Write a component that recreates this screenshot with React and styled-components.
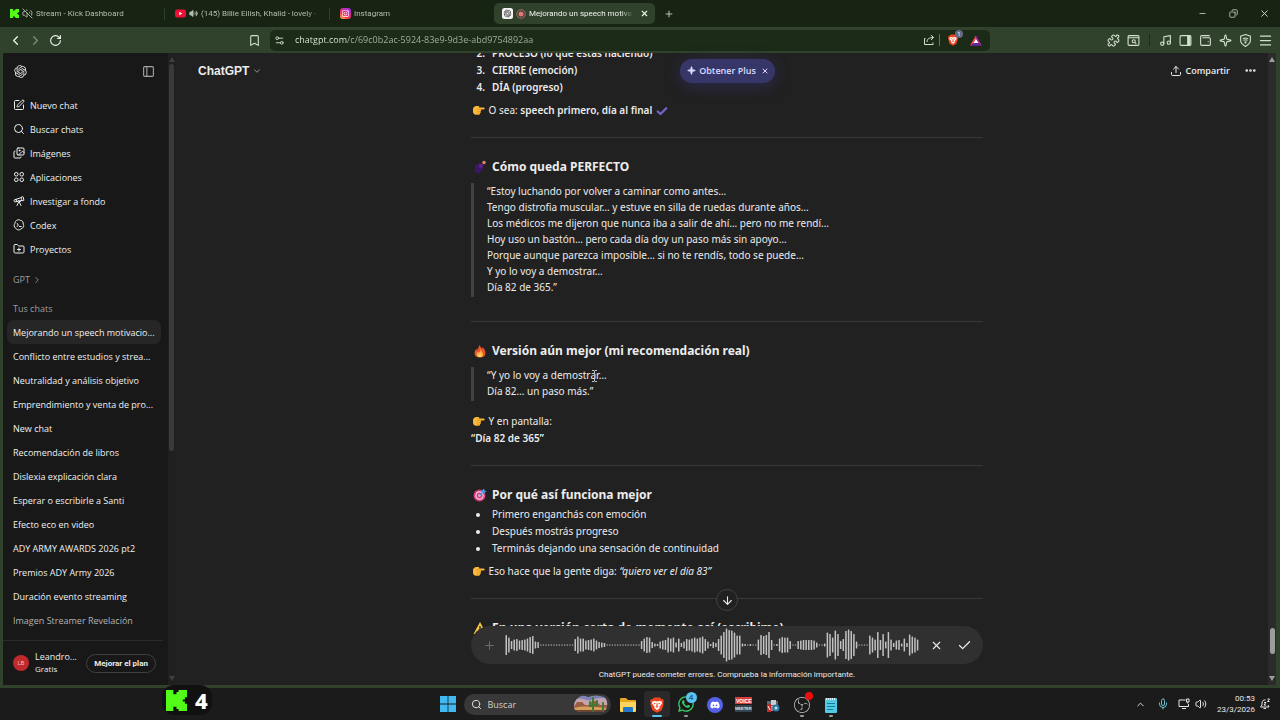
import { useLayoutEffect, useRef } from "react";
import styled, { createGlobalStyle } from "styled-components";
import {
  ArrowDown,
  Bookmark,
  Check,
  ChevronDown,
  ChevronLeft,
  ChevronRight,
  ChevronUp,
  Copy,
  Ellipsis,
  FolderPlus,
  Images,
  Menu,
  Mic,
  Minus,
  Music,
  PanelLeft,
  Plus,
  Puzzle,
  RotateCw,
  Search,
  Settings2,
  Sparkle,
  SquarePen,
  Telescope,
  Upload,
  Volume2,
  VolumeOff,
  WalletMinimal,
  X,
} from "lucide-react";
import { FaDiscord, FaInstagram, FaWhatsapp } from "react-icons/fa";
import { RiOpenaiFill } from "react-icons/ri";
import { SiObsstudio } from "react-icons/si";

const COLORS = {
  frame: "#30422c",
  tabBar: "#172413",
  address: "#1b2b17",
  sidebar: "#181818",
  main: "#212121",
  line: "#383838",
  text: "#ececec",
  chrome: "#d5ded1",
};

const FONT_UI = `"Open Sans", "Noto Sans", sans-serif`;
const FONT_BODY = `"Noto Sans", "Open Sans", sans-serif`;
const FONT_SMALL = `Roboto, "Noto Sans", sans-serif`;

const GlobalStyle = createGlobalStyle`
  * {
    box-sizing: border-box;
  }

  body {
    margin: 0;
    background: #1b1b1b;
    color: ${COLORS.text};
    font-family: ${FONT_UI};
    overflow: hidden;
  }

  button,
  input {
    margin: 0;
    padding: 0;
    border: 0;
    background: none;
    color: inherit;
    font: inherit;
    outline: none;
  }

  a {
    color: inherit;
    text-decoration: none;
  }

  b {
    font-weight: 600;
  }

  svg {
    display: block;
    flex-shrink: 0;
  }

  ul,
  ol,
  p,
  h1,
  h2,
  blockquote {
    margin: 0;
    padding: 0;
    list-style: none;
  }
`;

const Desktop = styled.div`
  display: flex;
  flex-direction: column;
  height: 100vh;
`;

const IconButton = styled.button`
  display: flex;
  align-items: center;
  justify-content: center;
  flex-shrink: 0;
  width: ${(props) => props.$width || "20px"};
  height: 20px;
  color: ${(props) => props.$color || "inherit"};
  cursor: pointer;
`;

/* ---------- browser: tabs ---------- */

const TabBar = styled.header`
  display: flex;
  align-items: center;
  height: 27px;
  background: ${COLORS.tabBar};
  color: ${COLORS.chrome};
`;

const Tab = styled.div`
  display: flex;
  align-items: center;
  gap: 3px;
  flex: 0 0 ${(props) => (props.$active ? "161px" : "164px")};
  min-width: 0;
  height: 21px;
  padding: ${(props) => (props.$active ? "0 3px 0 8px" : "0 10px")};
  border-radius: 5px;
  background: ${(props) => (props.$active ? COLORS.frame : "transparent")};
  color: ${(props) => (props.$active ? "#eef3ec" : "#b3bfae")};
`;

const TabTitle = styled.span`
  flex: 1;
  min-width: 0;
  overflow: hidden;
  font-family: ${FONT_SMALL};
  font-size: 8px;
  line-height: 12px;
  white-space: nowrap;
  mask-image: linear-gradient(90deg, #000 calc(100% - 12px), transparent);
`;

const Divider = styled.span`
  flex-shrink: 0;
  width: 1px;
  height: 12px;
  background: ${(props) => props.$color || "#30402c"};
`;

const WindowControls = styled.div`
  display: flex;
  margin-left: auto;
`;

/* ---------- browser: toolbar ---------- */

const Toolbar = styled.div`
  display: grid;
  grid-template-columns: 266px minmax(0, 1fr) 286px;
  align-items: center;
  height: 26px;
  padding: 0 4px;
  background: ${COLORS.frame};
  color: ${COLORS.chrome};
`;

const ToolGroup = styled.div`
  display: flex;
  align-items: center;
  padding: 0 1px;

  & > .push {
    margin-left: auto;
  }
`;

const AddressBar = styled.div`
  display: flex;
  align-items: center;
  height: 21px;
  padding: 0 4px;
  border-radius: 5px;
  background: ${COLORS.address};
`;

const AddressInput = styled.input`
  flex: 1;
  min-width: 0;
  margin-left: 10px;
  font-size: 9px;
  line-height: 20px;
  background: linear-gradient(90deg, #e9efe6 52px, #a9b6a4 52px);
  background-clip: text;
  color: transparent;
`;

const ShieldBadge = styled.span`
  position: relative;
  margin: 0 8px;

  & > small {
    position: absolute;
    top: -4px;
    right: -5px;
    width: 8px;
    border-radius: 4px;
    background: #646a80;
    color: #fff;
    font-size: 6px;
    line-height: 8px;
    text-align: center;
  }
`;

/* ---------- window body ---------- */

const WindowBody = styled.div`
  display: flex;
  flex: 1;
  min-height: 0;
  border: solid ${COLORS.frame};
  border-width: 0 4px 3px 3px;
  background: ${COLORS.main};
`;

const ScrollTrack = styled.div`
  display: flex;
  flex-direction: column;
  align-items: center;
  flex-shrink: 0;
  width: ${(props) => props.$width};
  padding: 4px 0;
  background: ${(props) => props.$track};
  color: ${(props) => props.$thumb};

  & > i {
    width: 5px;
    border-radius: 3px;
    background: currentColor;
    flex: ${(props) => props.$size} 0 0;
  }

  &::before,
  &::after {
    content: "";
    border: 3px solid transparent;
  }

  &::before {
    margin-bottom: 2px;
    border-top: 0;
    border-bottom: 5px solid ${(props) => props.$arrow};
  }

  &::after {
    margin-top: 2px;
    border-bottom: 0;
    border-top: 5px solid ${(props) => props.$arrow};
  }
`;

const TrackGap = styled.span`
  flex: ${(props) => props.$size} 0 0;
`;

/* ---------- sidebar ---------- */

const Sidebar = styled.aside`
  display: flex;
  flex-direction: column;
  flex: 0 0 165px;
  background: ${COLORS.sidebar};
  font-size: 9px;
`;

const SidebarTop = styled.div`
  display: flex;
  align-items: center;
  justify-content: space-between;
  height: 36px;
  padding: 0 13px 0 10px;
`;

const SidebarList = styled.ul`
  padding: ${(props) => props.$padding || "0"};
`;

const SidebarLink = styled.a`
  display: flex;
  align-items: center;
  gap: 5px;
  height: 24px;
  margin: 0 7px 0 4px;
  padding: 0 6px;
  border-radius: 7px;
  background: ${(props) => (props.$active ? "#262626" : "transparent")};
  color: ${(props) => (props.$faded ? "#b4b4b4" : "#f0f0f0")};
  white-space: nowrap;
`;

const SectionLabel = styled.h2`
  display: flex;
  align-items: center;
  gap: 2px;
  height: 23px;
  margin-top: 6px;
  padding: 0 10px;
  color: #9d9d9d;
  font-size: 9px;
  font-weight: 400;
`;

const Account = styled.div`
  display: flex;
  align-items: center;
  height: 45px;
  margin: auto 5px 0 0;
  padding: 0 7px 0 10px;
  border-top: 1px solid #2a2a2a;
`;

const Avatar = styled.span`
  width: 16px;
  margin-right: 6px;
  border-radius: 50%;
  background: #c02a2d;
  color: #f3c9c9;
  font-size: 6px;
  line-height: 16px;
  text-align: center;
`;

const AccountName = styled.span`
  flex: 1;
  line-height: 12px;

  & > small {
    display: block;
    font-size: 8px;
  }
`;

const UpgradeButton = styled.button`
  height: 19px;
  padding: 0 7px;
  border: 1px solid #404040;
  border-radius: 10px;
  font-family: ${FONT_SMALL};
  font-size: 8px;
  font-weight: 700;
  cursor: pointer;
`;

/* ---------- conversation ---------- */

const Main = styled.main`
  display: grid;
  grid-template-columns: minmax(0, 1fr);
  grid-template-rows: auto minmax(0, 1fr) auto;
  flex: 1;
  min-width: 0;
  min-height: 0;
`;

const ChatHeader = styled.div`
  display: grid;
  grid-template-columns: 1fr auto 1fr;
  align-items: center;
  grid-area: 1 / 1;
  z-index: 1;
  height: 35px;
  padding: 0 11px 0 23px;
`;

const ModelButton = styled.button`
  display: flex;
  align-items: center;
  justify-self: start;
  gap: 3px;
  font-family: "Liberation Sans", Arial, sans-serif;
  font-size: 12px;
  font-weight: 700;
  cursor: pointer;
`;

const PlusOffer = styled.div`
  display: flex;
  align-items: center;
  gap: 3px;
  height: 24px;
  padding: 0 4px 0 7px;
  border-radius: 12px;
  background: #373669;
  box-shadow: 0 3px 16px rgba(66, 60, 160, 0.35);
  color: #dcdaff;
  font-size: 9px;
  font-weight: 600;
`;

const HeaderActions = styled.div`
  display: flex;
  align-items: center;
  justify-self: end;
  gap: 13px;
`;

const ShareButton = styled.button`
  display: flex;
  align-items: center;
  gap: 4px;
  font-size: 9px;
  font-weight: 600;
  cursor: pointer;
`;

const Thread = styled.div`
  grid-area: 1 / 1 / -1 / 1;
  overflow: hidden;
  padding-left: 11px;
`;

const Article = styled.article`
  display: flex;
  flex-direction: column;
  max-width: 512px;
  margin: 0 auto;
  padding-bottom: 160px;
  font-family: ${FONT_BODY};
  font-size: 10px;
  line-height: 17px;
`;

const Steps = styled.ol`
  counter-reset: step 1;
  font-weight: 600;

  & > li {
    display: grid;
    grid-template-columns: 14px 1fr;
    gap: 7px;
    counter-increment: step;
  }

  & > li::before {
    content: counter(step) ".";
    text-align: right;
  }
`;

const Bullets = styled.ul`
  & > li {
    display: grid;
    grid-template-columns: 14px 1fr;
    align-items: center;
    gap: 7px;
  }

  & > li::before {
    content: "";
    justify-self: center;
    width: 4px;
    height: 4px;
    border-radius: 50%;
    background: currentColor;
  }
`;

const Paragraph = styled.p`
  margin-top: 6px;

  & svg {
    display: inline-block;
    margin: 0 1px;
    vertical-align: -2px;
  }
`;

const Rule = styled.hr`
  width: 100%;
  height: 1px;
  margin: 18px 0 20px;
  border: 0;
  background: ${COLORS.line};
`;

const Heading = styled.h2`
  display: flex;
  align-items: center;
  gap: 5px;
  margin-bottom: 2px;
  padding-left: 2px;
  font-size: 12px;
  font-weight: 700;
  line-height: 18px;
`;

const Quote = styled.blockquote`
  margin: 5px 0 6px;
  padding: 0 0 2px 13px;
  border-left: 3px solid #424242;
  line-height: 16px;
`;

const PointerAnchor = styled.span`
  position: relative;

  & > svg {
    position: absolute;
    top: 2px;
    left: 0;
  }
`;

const Footer = styled.div`
  display: flex;
  flex-direction: column;
  align-items: center;
  grid-area: 3 / 1;
  z-index: 1;
  padding-left: 11px;
`;

const DownButton = styled.button`
  display: flex;
  align-items: center;
  justify-content: center;
  width: 22px;
  height: 22px;
  margin-bottom: 15px;
  border: 1px solid #414141;
  border-radius: 50%;
  background: ${COLORS.main};
  cursor: pointer;
`;

const Composer = styled.div`
  display: flex;
  align-items: center;
  width: 100%;
  max-width: 512px;
  height: 38px;
  padding: 0 5px 0 8px;
  border-radius: 19px;
  background: #303030;
`;

const WaveBox = styled.div`
  flex: 1;
  min-width: 0;
  margin: 0 3px 0 6px;

  & > svg {
    width: 100%;
  }
`;

const Disclaimer = styled.p`
  align-self: stretch;
  height: 21px;
  background: ${COLORS.main};
  font-family: ${FONT_SMALL};
  font-size: 8px;
  line-height: 22px;
  text-align: center;
`;

/* ---------- taskbar ---------- */

const Taskbar = styled.footer`
  display: grid;
  grid-template-columns: 1fr auto 1fr;
  align-items: center;
  position: relative;
  height: 32px;
  padding: 0 9px 0 12px;
  background: #1b1b1b;
`;

const Apps = styled.div`
  display: flex;
  align-items: center;
  grid-column: 2;
  gap: 3px;
`;

const AppButton = styled.button`
  display: flex;
  flex-direction: column;
  align-items: center;
  justify-content: flex-end;
  position: relative;
  width: 26px;
  height: 26px;
  padding-bottom: 4px;
  border-radius: 3px;
  background: ${(props) => (props.$active ? "#2a2a2a" : "transparent")};
  cursor: pointer;

  &::after {
    content: "";
    position: absolute;
    bottom: 0;
    width: ${(props) => (props.$active ? "10px" : "4px")};
    height: 2px;
    border-radius: 1px;
    background: ${(props) => (props.$active ? "#5cc3ee" : props.$open ? "#9a9a9a" : "transparent")};
  }
`;

const Count = styled.span`
  position: absolute;
  top: 1px;
  right: 2px;
  width: ${(props) => props.$size};
  height: ${(props) => props.$size};
  border-radius: 50%;
  background: ${(props) => props.$color};
  color: #12303e;
  font-size: 8px;
  line-height: 10px;
  text-align: center;
`;

const TaskSearch = styled.label`
  display: flex;
  align-items: center;
  gap: 6px;
  width: 147px;
  height: 21px;
  margin: 0 1px 0 5px;
  padding: 0 3px 0 7px;
  border-radius: 11px;
  background: #383838;
  font-size: 9px;

  & > input {
    flex: 1;
    min-width: 0;
  }

  & > input::placeholder {
    color: #cfcfcf;
    opacity: 1;
  }
`;

const Tray = styled.div`
  display: flex;
  align-items: center;
  justify-content: flex-end;
  color: #e8e8e8;
`;

const Clock = styled.time`
  margin: 0 4px 0 9px;
  font-family: ${FONT_SMALL};
  font-size: 8px;
  line-height: 11px;
  text-align: right;
  white-space: pre-line;
`;

const ViewerBadge = styled.div`
  display: flex;
  align-items: center;
  gap: 8px;
  position: absolute;
  left: 162px;
  bottom: 5px;
  height: 30px;
  padding: 0 4px;
  border-radius: 12px;
  background: #111;
  color: #fff;
  font-family: "Noto Sans", sans-serif;
  font-size: 22px;
  font-weight: 800;
`;

/* ---------- drawings ---------- */

const KickLogo = ({ size = 10 }) => (
  <svg width={size} height={size} viewBox="0 0 20 20" aria-hidden="true">
    <path fill="#53fc18" d="M0 0h7v4h3V2h2V0h8v7h-2v2h-2v2h2v2h2v7h-8v-2h-2v-2H7v4H0z" />
  </svg>
);

const YoutubeLogo = () => (
  <svg width="11" height="9" viewBox="0 0 22 18" aria-hidden="true">
    <rect y="1" width="22" height="16" rx="4" fill="#ee0f37" />
    <path fill="#fff" d="M8.500 5.500v7l6-3.500z" />
  </svg>
);

const InstagramLogo = () => (
  <svg width="11" height="11" viewBox="0 0 22 22" aria-hidden="true">
    <defs>
      <linearGradient id="ig" x1="0" y1="1" x2="0.700" y2="0">
        <stop offset="0" stopColor="#ffc83c" />
        <stop offset="0.400" stopColor="#f5334f" />
        <stop offset="1" stopColor="#a52be0" />
      </linearGradient>
    </defs>
    <rect width="22" height="22" rx="6" fill="url(#ig)" />
    <FaInstagram x="3" y="3" size="16" color="#fff" />
  </svg>
);

const ChatFavicon = () => (
  <svg width="11" height="11" viewBox="0 0 22 22" aria-hidden="true">
    <rect width="22" height="22" rx="5" fill="#f4f4f4" />
    <RiOpenaiFill x="2" y="2" size="18" color="#222" />
  </svg>
);

const RecordDot = () => (
  <svg width="10" height="10" viewBox="0 0 20 20" aria-hidden="true">
    <circle cx="10" cy="10" r="8.500" fill="none" stroke="#d7777c" strokeWidth="1.500" />
    <circle cx="10" cy="10" r="5" fill="#e3757c" />
  </svg>
);

const ShareArrowIcon = () => (
  <svg
    width="12"
    height="12"
    viewBox="0 0 24 24"
    fill="none"
    stroke="currentColor"
    strokeWidth="2"
    strokeLinejoin="round"
    aria-hidden="true"
  >
    <path d="M5 9H3v12h17v-4M8 16c0-6 4-9 13-9M16 2l5 5-5 5" />
  </svg>
);

const BraveLion = ({ size = 12 }) => (
  <svg width={size} height={size + 2} viewBox="0 0 24 28" aria-hidden="true">
    <path fill="#f1451f" d="M7 1h10l3 3 2-.5 2 3.500-1 3 .5 3-3.500 10L13 27h-2l-7-4L.5 13 1 10 0 7l2-3.500L4 4z" />
    <path fill="#fff" d="M4 8l4-1 4 1 4-1 4 1 1 3-4 5-1 1 1 2-5 4-5-4 1-2-1-1-4-5z" />
    <path fill="#f1451f" d="M6 10l4 1-2 2zM18 10l-4 1 2 2zM11 11h2v5l2 1-3 2-3-2 2-1z" />
  </svg>
);

const BatLogo = () => (
  <svg width="12" height="11" viewBox="0 0 24 22" aria-hidden="true">
    <path fill="#a31f8e" d="M12 1L0 21h24z" />
    <path fill="#f0483a" d="M12 1L0 21l12-7z" />
    <path fill="#5b2a9d" d="M0 21h24l-12-7z" />
    <path fill="#fff" d="M12 8l-5 8h10z" />
  </svg>
);

const PageSearchIcon = () => (
  <svg width="13" height="13" viewBox="0 0 24 24" fill="none" stroke="currentColor" strokeWidth="2" aria-hidden="true">
    <rect x="2" y="3" width="20" height="18" rx="2" />
    <path d="M2 7h20M15 16l2 2" />
    <circle cx="12.500" cy="13.500" r="2.800" />
  </svg>
);

const SidePanelIcon = () => (
  <svg width="13" height="13" viewBox="0 0 24 24" aria-hidden="true">
    <rect x="2" y="3" width="20" height="18" rx="2" fill="none" stroke="currentColor" strokeWidth="2" />
    <path fill="currentColor" d="M15 3h6v18h-6z" />
  </svg>
);

const VpnIcon = () => (
  <svg width="13" height="13" viewBox="0 0 24 24" fill="none" stroke="currentColor" strokeWidth="2" aria-hidden="true">
    <path d="M12 1l9 3v8c0 5-4 8-9 11-5-3-9-6-9-11V4z" />
    <path d="M7 9c3-2 7-2 10 0M8.500 12c2-1.500 5-1.500 7 0" />
    <circle cx="12" cy="15.500" r="1" fill="currentColor" />
  </svg>
);

const AppsIcon = () => (
  <svg width="12" height="12" viewBox="0 0 24 24" fill="none" stroke="currentColor" strokeWidth="2" aria-hidden="true">
    <circle cx="6.500" cy="6.500" r="3.600" />
    <circle cx="17.500" cy="6.500" r="3.600" />
    <circle cx="6.500" cy="17.500" r="3.600" />
    <circle cx="17.500" cy="17.500" r="3.600" />
  </svg>
);

const CodexIcon = () => (
  <svg width="12" height="12" viewBox="0 0 24 24" fill="none" stroke="currentColor" strokeWidth="2" aria-hidden="true">
    <path d="M9 2c2-.8 4-.6 5.500.6 2 0 4 1 5 3 1 1.500 1.200 3 .8 4.600 1.300 2 1.400 4 .4 6-1 2-2.600 3-4.600 3.400C14.500 21.500 12 22.300 9.500 21.500 7.500 21 6 20 5.200 18.200 3.500 17 2.400 15.300 2.300 13.200c0-1.600.4-3 1.500-4.200C3.800 5.500 5.800 3 9 2z" />
    <path d="M8.500 9l2 3-2 3M13 15h3.500" strokeLinecap="round" />
  </svg>
);

const PointingHand = () => (
  <svg width="13" height="12" viewBox="0 0 26 24" aria-hidden="true">
    <path fill="#f9b83a" d="M2 10c0-3 3-6 7-6h4c1.500 0 2 1.500 1 3h9c3 0 3 4 0 4h-6c1.500 1 1.500 3 0 4 1 1 .5 3-1 3.500.5 1.500-.5 3-2.500 3H8c-4 0-6-3-6-6z" />
    <path fill="none" stroke="#d98a1d" d="M10 11h7M10 15h6.500M10 18.500h5.500M14 7l-4 3" />
  </svg>
);

const PurpleCheck = () => (
  <svg width="12" height="10" viewBox="0 0 24 20" aria-hidden="true">
    <path fill="none" stroke="#7462d2" strokeWidth="4.500" strokeLinecap="round" strokeLinejoin="round" d="M3.500 11l5.500 5L20.500 4.500" />
  </svg>
);

const BlueGlow = () => (
  <svg width="14" height="14" viewBox="0 0 28 28" aria-hidden="true">
    <path fill="#3d1767" d="M3 11l6-2 5-5 3 7 6 5-6 3-2 6-6 1-6-3 2-6z" />
    <path fill="#652484" d="M13 9l8-2-3 9-6-1z" />
    <circle cx="22" cy="5" r="3.500" fill="#e88563" />
  </svg>
);

const Flame = () => (
  <svg width="14" height="14" viewBox="0 0 28 28" aria-hidden="true">
    <path fill="#e8542f" d="M12 1c1 4 5 5 6 9 1-1 1-3 1-4 4 4 6 8 6 12 0 6-4 9-11 9S3 24 3 18c0-4 2-6 4-9 0 2 0 3 1 4 1-4 5-7 4-12z" />
    <path fill="#ffab3d" d="M15 10c0 4 5 6 5 11 0 4-3 5-6 5s-7-1-7-5c0-3 2-4 3-6 1 1 1 2 1 3 2-2 4-4 4-8z" />
    <path fill="#ffd96b" d="M14 18c1 2 3 3 3 5s-1 3-3 3-4-1-4-3 3-3 4-5z" />
  </svg>
);

const Target = () => (
  <svg width="14" height="14" viewBox="0 0 28 28" aria-hidden="true">
    <circle cx="13" cy="15" r="12" fill="#d8397e" />
    <circle cx="13" cy="15" r="8.500" fill="#f3d5e6" />
    <circle cx="13" cy="15" r="6" fill="#d8397e" />
    <circle cx="13" cy="15" r="2.500" fill="#f3d5e6" />
    <path stroke="#37a3ea" strokeWidth="2.500" d="M13 15l9-9" />
    <path fill="#37a3ea" d="M18 5l4-4 1 4 4 1-4 4-5-1z" />
  </svg>
);

const Warning = () => (
  <svg width="14" height="14" viewBox="0 0 28 28" aria-hidden="true">
    <path fill="#f6c744" d="M14 2L27 26H1z" />
    <path stroke="#3a3a3a" strokeWidth="3" d="M14 10v8M14 20v3" />
  </svg>
);

const TextPointer = () => (
  <svg width="7" height="12" viewBox="0 0 7 12" aria-hidden="true">
    <path fill="none" stroke="#bdbdbd" d="M1 .5h2l.5.5.5-.5h2M3.500 1v10M1 11.500h2l.5-.5.500.5h2" />
  </svg>
);

const StartLogo = () => (
  <svg width="16" height="16" viewBox="0 0 16 16" aria-hidden="true">
    <path fill="#43b9f3" d="M0 0h7.600v7.600H0zM8.400 0H16v7.600H8.400zM0 8.400h7.600V16H0zM8.400 8.400H16V16H8.400z" />
  </svg>
);

const DesertArt = () => (
  <svg width="34" height="18" viewBox="0 0 34 18" aria-hidden="true">
    <defs>
      <clipPath id="desert">
        <path d="M4 3q4-4 10-1 8-3 16 0 4 3 3 9-1 6-6 6H8q-8 0-8-5 0-6 4-9z" />
      </clipPath>
    </defs>
    <g clipPath="url(#desert)">
      <path fill="#7d83b4" d="M0 0h34v18H0z" />
      <path fill="#c3a3ae" d="M0 5c8-4 12 2 18 0s10-3 16-1v8H0z" />
      <path fill="#9a5c40" d="M0 12l3-5h5l3 3h5l2-4h4l4 4h8v8H0z" />
      <path fill="#d6a05c" d="M0 13c10-3 22-1 34 0v2H0z" />
      <path fill="#6b4434" d="M0 15h34v3H0z" />
      <path fill="none" stroke="#3f7a34" strokeWidth="2" strokeLinecap="round" d="M19 16V3M19 11h-3V7M19 10h4V6M29 15V8" />
    </g>
  </svg>
);

const FolderLogo = () => (
  <svg width="18" height="16" viewBox="0 0 18 16" aria-hidden="true">
    <path fill="#e9a820" d="M1 2q0-1 1-1h5l2 2h7q1 0 1 1v4H1z" />
    <path fill="#fdd55c" d="M1 5h16v9q0 1-1 1H2q-1 0-1-1z" />
    <path fill="#1f78c8" d="M4 11q0-1 1-1h8q1 0 1 1v4H4z" />
  </svg>
);

const VoicemeeterLogo = () => (
  <svg width="17" height="16" viewBox="0 0 17 16" aria-hidden="true">
    <path fill="#d8403f" d="M0 0h17v7H0z" />
    <path fill="#33424c" d="M0 8h17v7H0z" />
    <text x="1" y="6" fill="#fff" fontFamily="Liberation Sans" fontSize="5" fontWeight="700">VOICE</text>
    <text x="0" y="13" fill="#dfe7ea" fontFamily="Liberation Sans" fontSize="4" fontWeight="700">MEETER</text>
  </svg>
);

const MixerLogo = () => (
  <svg width="14" height="14" viewBox="0 0 14 14" aria-hidden="true">
    <path fill="#5c6870" d="M1 2h11v6H1z" />
    <path fill="#c9d0d4" d="M5 1h5v5H5z" />
    <path fill="#c8282c" d="M1 5h4v8H1z" />
    <path stroke="#fff" d="M2 7l2 4M6 7v5" />
    <circle cx="10" cy="9" r="3.500" fill="#2a79a8" />
    <circle cx="10" cy="9" r="1.500" fill="#bfe0ef" />
  </svg>
);

const DiscordLogo = () => (
  <svg width="16" height="16" viewBox="0 0 32 32" aria-hidden="true">
    <circle cx="16" cy="16" r="16" fill="#5560e8" />
    <FaDiscord x="6" y="6" size="20" color="#fff" />
  </svg>
);

const NotepadLogo = () => (
  <svg width="14" height="16" viewBox="0 0 14 16" aria-hidden="true">
    <rect x="1" y="1" width="12" height="15" rx="1" fill="#4fcbe4" />
    <path stroke="#1b7896" d="M3 6.500h8M3 9.500h8M3 12.500h6" />
    <path stroke="#d9f6fc" strokeDasharray="1 1" strokeWidth="2" d="M2 2h10" />
  </svg>
);

const NetworkIcon = () => (
  <svg width="12" height="12" viewBox="0 0 24 24" fill="none" stroke="currentColor" strokeWidth="2" aria-hidden="true">
    <path d="M15 4H2v13h19v-5M8 21h8M17 2h5v6h-5zM19.500 8v3" />
  </svg>
);

const BellSnoozeIcon = () => (
  <svg width="12" height="12" viewBox="0 0 24 24" fill="none" stroke="currentColor" strokeWidth="2" aria-hidden="true">
    <path d="M13 4C9 3 6 6 6 10v4l-3 4h17l-2-4M9 21h5M10 9h4l-4 5h4M17 2h4l-4 5h4" />
  </svg>
);

/* ---------- data ---------- */

const NAV = [
  { title: "Nuevo chat", icon: <SquarePen size={12} /> },
  { title: "Buscar chats", icon: <Search size={12} /> },
  { title: "Imágenes", icon: <Images size={12} /> },
  { title: "Aplicaciones", icon: <AppsIcon /> },
  { title: "Investigar a fondo", icon: <Telescope size={12} /> },
  { title: "Codex", icon: <CodexIcon /> },
  { title: "Proyectos", icon: <FolderPlus size={12} /> },
];

const CHATS = [
  "Mejorando un speech motivacio...",
  "Conflicto entre estudios y strea...",
  "Neutralidad y análisis objetivo",
  "Emprendimiento y venta de pro...",
  "New chat",
  "Recomendación de libros",
  "Dislexia explicación clara",
  "Esperar o escribirle a Santi",
  "Efecto eco en video",
  "ADY ARMY AWARDS 2026 pt2",
  "Premios ADY Army 2026",
  "Duración evento streaming",
  "Imagen Streamer Revelación",
];

const SPEECH = [
  "“Estoy luchando por volver a caminar como antes…",
  "Tengo distrofia muscular… y estuve en silla de ruedas durante años…",
  "Los médicos me dijeron que nunca iba a salir de ahí… pero no me rendí…",
  "Hoy uso un bastón… pero cada día doy un paso más sin apoyo…",
  "Porque aunque parezca imposible… si no te rendís, todo se puede…",
  "Y yo lo voy a demostrar…",
  "Día 82 de 365.”",
];

// amplitude of each recorded sample, 1 is silence
const quiet = (n) => Array(n).fill(1);
const WAVE = [
  20, 15, 8, 11, 12, 9, 10, 11, 13, 16, 18, 7, 6, ...quiet(13),
  12, 17, 13, 13, 9, 10, 11, 13, 9, 6, 5, 4, ...quiet(13),
  8, 13, 16, 15, 6, 3, 2, 7, 9, 10, 15, 13, 15, 5, 13, 4, 7, 12, 11, 13, 15, 13, 15, 17, 12, 7, 2, 6, 4,
  12, 19, 26, 33, 30, 29, 25, 19, 19, 3, 2, 1, 2, 1, 1,
  11, 20, 18, 20, 26, 10, 1, 2, 13, 16, 15, 15, 8, 1, 1, 8, 9, 10, 10, 10, 10, 9, 5, 1, 1, 3,
  25, 22, 15, 29, 22, 8, 12, 28, 31, 28, 22, 7, ...quiet(4),
  19, 15, 11, 26, 10, 22, 7, 26, 11, 4, 9, 10, 3, 13, 4, 21, 17, 15, 11,
];

const Wave = () => {
  const width = 414;
  const step = width / WAVE.length;
  return (
    <WaveBox>
      <svg height="34" viewBox={`0 0 ${width} 34`} role="img" aria-label="Grabación de voz">
        {WAVE.map((h, i) => (
          <rect key={i} x={i * step + 0.5} y={17 - h / 2} width="1.500" height={h} rx="0.500" fill="#c3c3c3" />
        ))}
      </svg>
    </WaveBox>
  );
};

const Browser = () => (
  <>
    <TabBar>
      <Tab>
        <KickLogo size={9} />
        <VolumeOff size={11} />
        <TabTitle>Stream - Kick Dashboard</TabTitle>
      </Tab>
      <Divider />
      <Tab>
        <YoutubeLogo />
        <Volume2 size={9} fill="currentColor" />
        <TabTitle>(145) Billie Eilish, Khalid - lovely -</TabTitle>
      </Tab>
      <Divider />
      <Tab>
        <InstagramLogo />
        <TabTitle>Instagram</TabTitle>
      </Tab>
      <Tab $active>
        <ChatFavicon />
        <RecordDot />
        <TabTitle>Mejorando un speech motiva</TabTitle>
        <IconButton $width="16px" aria-label="Cerrar pestaña">
          <X size={9} strokeWidth={3} />
        </IconButton>
      </Tab>
      <IconButton $width="28px" aria-label="Nueva pestaña">
        <Plus size={10} />
      </IconButton>
      <WindowControls>
        <IconButton $width="31px" aria-label="Minimizar">
          <Minus size={9} />
        </IconButton>
        <IconButton $width="31px" aria-label="Restaurar">
          <Copy size={9} transform="rotate(90)" />
        </IconButton>
        <IconButton $width="31px" aria-label="Cerrar">
          <X size={11} />
        </IconButton>
      </WindowControls>
    </TabBar>
    <Toolbar>
      <ToolGroup>
        <IconButton aria-label="Atrás" $color="#f2f6f0">
          <ChevronLeft size={15} />
        </IconButton>
        <IconButton aria-label="Adelante" $color="#7e8f79">
          <ChevronRight size={15} />
        </IconButton>
        <IconButton aria-label="Recargar" $color="#f2f6f0">
          <RotateCw size={13} />
        </IconButton>
        <IconButton aria-label="Guardar" className="push" $width="30px">
          <Bookmark size={13} />
        </IconButton>
      </ToolGroup>
      <AddressBar>
        <Settings2 size={11} />
        <AddressInput aria-label="Dirección" defaultValue="chatgpt.com/c/69c0b2ac-5924-83e9-9d3e-abd9754892aa" />
        <IconButton aria-label="Compartir página">
          <ShareArrowIcon />
        </IconButton>
        <Divider $color="#64745f" />
        <ShieldBadge>
          <BraveLion size={10} />
          <small>1</small>
        </ShieldBadge>
        <IconButton aria-label="Recompensas">
          <BatLogo />
        </IconButton>
      </AddressBar>
      <ToolGroup>
        <IconButton className="push" aria-label="Extensiones">
          <Puzzle size={13} />
        </IconButton>
        <IconButton aria-label="Buscar en la página">
          <PageSearchIcon />
        </IconButton>
        <IconButton as="span" $width="12px">
          <Divider $color="#1d2c19" />
        </IconButton>
        <IconButton aria-label="Música">
          <Music size={13} />
        </IconButton>
        <IconButton aria-label="Panel lateral">
          <SidePanelIcon />
        </IconButton>
        <IconButton aria-label="Cartera">
          <WalletMinimal size={13} />
        </IconButton>
        <IconButton aria-label="Leo">
          <Sparkle size={13} />
        </IconButton>
        <IconButton aria-label="VPN">
          <VpnIcon />
        </IconButton>
        <IconButton aria-label="Menú">
          <Menu size={15} />
        </IconButton>
      </ToolGroup>
    </Toolbar>
  </>
);

const ChatSidebar = () => (
  <>
    <Sidebar>
      <SidebarTop>
        <RiOpenaiFill size={15} />
        <PanelLeft size={13} color="#a5a5a5" />
      </SidebarTop>
      <nav>
        <SidebarList $padding="4px 0 1px">
          {NAV.map(({ title, icon }) => (
            <li key={title}>
              <SidebarLink href="#">
                {icon}
                {title}
              </SidebarLink>
            </li>
          ))}
        </SidebarList>
        <SectionLabel>
          GPT <ChevronRight size={10} />
        </SectionLabel>
        <SectionLabel>Tus chats</SectionLabel>
        <SidebarList>
          {CHATS.map((title, i) => (
            <li key={title}>
              <SidebarLink href="#" $active={i === 0} $faded={i === CHATS.length - 1}>
                {title}
              </SidebarLink>
            </li>
          ))}
        </SidebarList>
      </nav>
      <Account>
        <Avatar>LB</Avatar>
        <AccountName>
          Leandro...
          <small>Gratis</small>
        </AccountName>
        <UpgradeButton>Mejorar el plan</UpgradeButton>
      </Account>
    </Sidebar>
    <ScrollTrack $width="7px" $track="#202020" $thumb="#3a3a3a" $arrow="#3f3f3f" $size={386}>
      <i />
      <TrackGap $size={222} />
    </ScrollTrack>
  </>
);

const Conversation = () => {
  const thread = useRef(null);

  useLayoutEffect(() => {
    thread.current.scrollTop = 8;
  }, []);

  return (
    <Main>
      <Thread ref={thread}>
        <Article>
          <Steps>
            <li>PROCESO (lo que estás haciendo)</li>
            <li>CIERRE (emoción)</li>
            <li>DÍA (progreso)</li>
          </Steps>
          <Paragraph>
            <PointingHand /> O sea: <b>speech primero, día al final</b> <PurpleCheck />
          </Paragraph>
          <Rule />
          <Heading>
            <BlueGlow /> Cómo queda PERFECTO
          </Heading>
          <Quote>
            {SPEECH.map((line) => (
              <p key={line}>{line}</p>
            ))}
          </Quote>
          <Rule />
          <Heading>
            <Flame /> Versión aún mejor (mi recomendación real)
          </Heading>
          <Quote>
            <p>
              “Y yo lo voy a demostr
              <PointerAnchor>
                <TextPointer />
              </PointerAnchor>
              ar…
            </p>
            <p>Día 82… un paso más.”</p>
          </Quote>
          <Paragraph>
            <PointingHand /> Y en pantalla:
            <br />
            <b>“Día 82 de 365”</b>
          </Paragraph>
          <Rule />
          <Heading>
            <Target /> Por qué así funciona mejor
          </Heading>
          <Bullets>
            <li>Primero enganchás con emoción</li>
            <li>Después mostrás progreso</li>
            <li>Terminás dejando una sensación de continuidad</li>
          </Bullets>
          <Paragraph>
            <PointingHand /> Eso hace que la gente diga: <em>“quiero ver el día 83”</em>
          </Paragraph>
          <Rule />
          <Heading>
            <Warning /> En una versión corta de momento así (escribime)
          </Heading>
        </Article>
      </Thread>
      <ChatHeader>
        <ModelButton>
          ChatGPT <ChevronDown size={10} color="#a8a8a8" />
        </ModelButton>
        <PlusOffer>
          <Sparkle size={9} fill="currentColor" />
          Obtener Plus
          <IconButton $width="12px" aria-label="Cerrar oferta">
            <X size={8} strokeWidth={3} />
          </IconButton>
        </PlusOffer>
        <HeaderActions>
          <ShareButton>
            <Upload size={12} />
            Compartir
          </ShareButton>
          <IconButton $width="14px" aria-label="Más opciones">
            <Ellipsis size={13} strokeWidth={3} />
          </IconButton>
        </HeaderActions>
      </ChatHeader>
      <Footer>
        <DownButton aria-label="Ir al final">
          <ArrowDown size={13} />
        </DownButton>
        <Composer>
          <IconButton aria-label="Adjuntar" $color="#6b6b6b">
            <Plus size={13} />
          </IconButton>
          <Wave />
          <IconButton $width="28px" aria-label="Cancelar dictado">
            <X size={13} />
          </IconButton>
          <IconButton $width="28px" aria-label="Enviar dictado">
            <Check size={15} />
          </IconButton>
        </Composer>
        <Disclaimer>ChatGPT puede cometer errores. Comprueba la información importante.</Disclaimer>
      </Footer>
    </Main>
  );
};

const WindowsTaskbar = () => (
  <Taskbar>
    <ViewerBadge>
      <KickLogo size={21} />4
    </ViewerBadge>
    <Apps>
      <IconButton $width="16px" aria-label="Inicio">
        <StartLogo />
      </IconButton>
      <TaskSearch>
        <Search size={11} />
        <input type="text" placeholder="Buscar" aria-label="Buscar" />
        <DesertArt />
      </TaskSearch>
      <AppButton aria-label="Explorador de archivos">
        <FolderLogo />
      </AppButton>
      <AppButton $active aria-label="Brave">
        <BraveLion size={14} />
      </AppButton>
      <AppButton $open aria-label="WhatsApp">
        <FaWhatsapp size={18} color="#35d366" />
        <Count $size="11px" $color="#5cc3ee">
          4
        </Count>
      </AppButton>
      <AppButton aria-label="Discord">
        <DiscordLogo />
      </AppButton>
      <AppButton aria-label="Voicemeeter">
        <VoicemeeterLogo />
      </AppButton>
      <AppButton aria-label="Mezclador">
        <MixerLogo />
      </AppButton>
      <AppButton $open aria-label="OBS Studio">
        <SiObsstudio size={16} color="#c9c9c9" />
        <Count $size="8px" $color="#ee0c0c" />
      </AppButton>
      <AppButton $open aria-label="Bloc de notas">
        <NotepadLogo />
      </AppButton>
    </Apps>
    <Tray>
      <IconButton $width="22px" aria-label="Mostrar iconos ocultos">
        <ChevronUp size={11} />
      </IconButton>
      <IconButton $width="22px" aria-label="Micrófono" $color="#6cc0d0">
        <Mic size={12} />
      </IconButton>
      <IconButton aria-label="Red">
        <NetworkIcon />
      </IconButton>
      <IconButton $width="14px" aria-label="Volumen">
        <Volume2 size={12} />
      </IconButton>
      <Clock>{"00:53\n23/3/2026"}</Clock>
      <BellSnoozeIcon />
    </Tray>
  </Taskbar>
);

const App = () => (
  <Desktop>
    <GlobalStyle />
    <Browser />
    <WindowBody>
      <ChatSidebar />
      <Conversation />
      <ScrollTrack $width="8px" $track="#2b2b2b" $thumb="#9c9c9c" $arrow="#9c9c9c" $size={26}>
        <TrackGap $size={560} />
        <i />
        <TrackGap $size={20} />
      </ScrollTrack>
    </WindowBody>
    <WindowsTaskbar />
  </Desktop>
);

export default App;
